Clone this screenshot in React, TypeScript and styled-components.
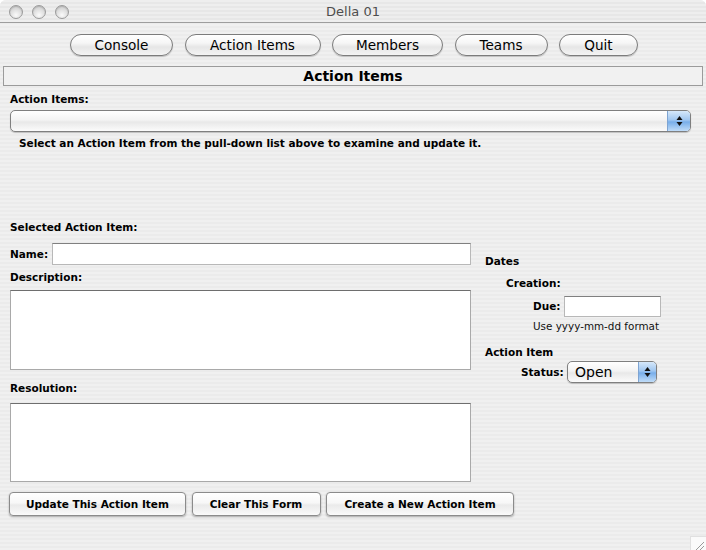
import React from "react";
import styled, { createGlobalStyle } from "styled-components";

const Global = createGlobalStyle`
  html, body { margin: 0; padding: 0; background: #ffffff; }
  body { font-family: "DejaVu Sans", "Liberation Sans", sans-serif; }
  * { box-sizing: border-box; }
`;

const Window = styled.div`
  position: relative;
  width: 706px;
  height: 550px;
  display: flex;
  flex-direction: column;
  border-radius: 6px 6px 0 0;
  overflow: hidden;
  background: repeating-linear-gradient(
    to bottom,
    #f0f0f0 0px,
    #f0f0f0 2px,
    #ebebeb 2px,
    #ebebeb 4px
  );
`;

const TitleBar = styled.div`
  height: 23px;
  flex: none;
  display: grid;
  grid-template-columns: 1fr auto 1fr;
  align-items: center;
  border-bottom: 1px solid #9d9d9d;
  background: repeating-linear-gradient(
    to bottom,
    #eeeeee 0px,
    #eeeeee 2px,
    #e7e7e7 2px,
    #e7e7e7 4px
  );
`;

const Lights = styled.div`
  display: flex;
  gap: 9px;
  padding-left: 9px;
  padding-top: 2px;
`;

const Light = styled.span`
  width: 14px;
  height: 14px;
  border-radius: 50%;
  border: 1px solid #9a9a9a;
  background: radial-gradient(circle at 50% 75%, #fafafa 0%, #dcdcdc 55%, #c4c4c4 100%);
  box-shadow: inset 0 1px 1px rgba(0, 0, 0, 0.15);
`;

const Title = styled.div`
  font-size: 13px;
  color: #4e4e4e;
  padding-top: 1px;
`;

const Toolbar = styled.div`
  display: flex;
  justify-content: center;
  gap: 11.5px;
  padding-top: 11px;
  padding-left: 2px;
`;

const PillButton = styled.button<{ $w: number }>`
  width: ${(p) => p.$w}px;
  height: 22px;
  padding: 0;
  border: 1px solid #7c7c7c;
  border-radius: 11px;
  font-family: "DejaVu Sans", sans-serif;
  font-size: 13.6px;
  color: #000;
  background: linear-gradient(
    to bottom,
    #ffffff 0%,
    #f6f6f6 40%,
    #e6e6e6 60%,
    #f4f4f4 100%
  );
  box-shadow: 0 1px 1px rgba(0, 0, 0, 0.2);
  line-height: 20px;
`;

const Header = styled.div`
  margin: 10px 3px 0;
  height: 20px;
  border: 1px solid #9b9b9b;
  background: #f1f1f1;
  text-align: center;
  font-weight: bold;
  font-size: 14px;
  line-height: 18px;
  color: #000;
`;

const Content = styled.div`
  display: flex;
  flex-direction: column;
  padding: 0 10px;
`;

const Label = styled.div<{ $indent?: number; $mt?: number }>`
  font-size: 10.5px;
  font-weight: bold;
  line-height: 13px;
  color: #000;
  padding-left: ${(p) => p.$indent ?? 0}px;
  margin-top: ${(p) => p.$mt ?? 0}px;
  white-space: nowrap;
`;

const Note = styled.div<{ $indent?: number; $mt?: number }>`
  font-size: 10.4px;
  line-height: 13px;
  color: #111;
  padding-left: ${(p) => p.$indent ?? 0}px;
  margin-top: ${(p) => p.$mt ?? 0}px;
  white-space: nowrap;
`;

const PopUp = styled.div<{ $w?: number }>`
  display: flex;
  height: 22px;
  width: ${(p) => (p.$w ? `${p.$w}px` : "auto")};
  border: 1px solid #7f7f7f;
  border-radius: 5px;
  overflow: hidden;
  background: linear-gradient(to bottom, #ffffff 0%, #f3f3f3 45%, #e8e8e8 55%, #fbfbfb 100%);
  box-shadow: 0 1px 1px rgba(0, 0, 0, 0.2);
`;

const MainPopUp = styled(PopUp)`
  margin-top: 4px;
  margin-right: 5px;
`;

const PopValue = styled.div`
  flex: 1;
  font-size: 14px;
  line-height: 20px;
  padding-left: 7px;
  color: #000;
`;

const PopArrow = styled.div<{ $w: number }>`
  width: ${(p) => p.$w}px;
  flex: none;
  display: flex;
  align-items: center;
  justify-content: center;
  border-left: 1px solid #7ea4d2;
  background: linear-gradient(to bottom, #d6e8fa 0%, #9fc6f0 45%, #78aeea 55%, #c0dcf8 100%);
`;

const FormGrid = styled.div`
  display: grid;
  grid-template-columns: 461px 1fr;
  column-gap: 14px;
  margin-top: 71px;
`;

const Column = styled.div<{ $pt?: number }>`
  display: flex;
  flex-direction: column;
  padding-top: ${(p) => p.$pt ?? 0}px;
`;

const FieldRow = styled.div<{ $indent?: number; $mt?: number }>`
  display: flex;
  align-items: center;
  padding-left: ${(p) => p.$indent ?? 0}px;
  margin-top: ${(p) => p.$mt ?? 0}px;
`;

const RowLabel = styled(Label)<{ $w: number }>`
  width: ${(p) => p.$w}px;
  flex: none;
`;

const TextField = styled.input<{ $w?: number; $h: number }>`
  height: ${(p) => p.$h}px;
  width: ${(p) => (p.$w ? `${p.$w}px` : "auto")};
  flex: ${(p) => (p.$w ? "none" : "1")};
  min-width: 0;
  border: 1px solid #b8b8b8;
  border-top-color: #808080;
  background: #fff;
  padding: 0 3px;
  font-family: "DejaVu Sans", sans-serif;
  font-size: 11px;
  outline: none;
`;

const TextArea = styled.textarea<{ $h: number; $mt: number }>`
  height: ${(p) => p.$h}px;
  margin-top: ${(p) => p.$mt}px;
  width: 100%;
  resize: none;
  border: 1px solid #a9a9a9;
  border-top-color: #6e6e6e;
  background: #fff;
  font-family: "DejaVu Sans", sans-serif;
  font-size: 11px;
  outline: none;
  display: block;
`;

const ButtonRow = styled.div`
  display: flex;
  gap: 5.5px;
  margin-top: 10px;
  margin-left: -1px;
`;

const PushButton = styled.button<{ $w: number }>`
  width: ${(p) => p.$w}px;
  height: 24px;
  padding: 0;
  border: 1px solid #8b8b8b;
  border-radius: 4px;
  font-family: "DejaVu Sans", sans-serif;
  font-weight: bold;
  font-size: 10.5px;
  color: #000;
  background: linear-gradient(to bottom, #ffffff 0%, #f7f7f7 45%, #eaeaea 55%, #fafafa 100%);
  box-shadow: 0 1px 2px rgba(0, 0, 0, 0.3);
`;

const Grip = styled.div`
  position: absolute;
  right: 0;
  bottom: 0;
  width: 16px;
  height: 14px;
  background: #fafafa;
  border-top: 1px solid #e0e0e0;
  border-left: 1px solid #e0e0e0;
`;

const Arrows = () => (
  <svg width="7" height="12" viewBox="0 0 7 12">
    <path d="M3.5 1 L6.5 5 L0.5 5 Z" fill="#111" />
    <path d="M3.5 11 L6.5 7 L0.5 7 Z" fill="#111" />
  </svg>
);

export default function App() {
  return (
    <>
      <Global />
      <Window>
        <TitleBar>
          <Lights>
            <Light />
            <Light />
            <Light />
          </Lights>
          <Title>Della 01</Title>
          <div />
        </TitleBar>
        <Toolbar>
          <PillButton $w={103}>Console</PillButton>
          <PillButton $w={136}>Action Items</PillButton>
          <PillButton $w={111}>Members</PillButton>
          <PillButton $w={93}>Teams</PillButton>
          <PillButton $w={79}>Quit</PillButton>
        </Toolbar>
        <Header>Action Items</Header>
        <Content>
          <Label $mt={7}>Action Items:</Label>
          <MainPopUp>
            <PopValue />
            <PopArrow $w={23}>
              <Arrows />
            </PopArrow>
          </MainPopUp>
          <Label $indent={9} $mt={5}>
            Select an Action Item from the pull-down list above to examine and update it.
          </Label>
          <FormGrid>
            <Column>
              <Label>Selected Action Item:</Label>
              <FieldRow $mt={9}>
                <RowLabel $w={42}>Name:</RowLabel>
                <TextField $h={22} />
              </FieldRow>
              <Label $mt={6}>Description:</Label>
              <TextArea $h={80} $mt={6} />
              <Label $mt={12}>Resolution:</Label>
              <TextArea $h={79} $mt={8} />
            </Column>
            <Column $pt={34}>
              <Label>Dates</Label>
              <Label $indent={21} $mt={9}>Creation:</Label>
              <FieldRow $indent={48} $mt={6}>
                <RowLabel $w={31}>Due:</RowLabel>
                <TextField $h={21} $w={97} />
              </FieldRow>
              <Note $indent={48} $mt={3}>Use yyyy-mm-dd format</Note>
              <Label $mt={13}>Action Item</Label>
              <FieldRow $indent={36} $mt={2}>
                <RowLabel $w={46}>Status:</RowLabel>
                <PopUp $w={90}>
                  <PopValue>Open</PopValue>
                  <PopArrow $w={18}>
                    <Arrows />
                  </PopArrow>
                </PopUp>
              </FieldRow>
            </Column>
          </FormGrid>
          <ButtonRow>
            <PushButton $w={177}>Update This Action Item</PushButton>
            <PushButton $w={129}>Clear This Form</PushButton>
            <PushButton $w={188}>Create a New Action Item</PushButton>
          </ButtonRow>
        </Content>
        <Grip>
          <svg width="15" height="13" viewBox="0 0 15 13">
            <path d="M13 3 L4 12 M13 7 L8 12" stroke="#9a9a9a" strokeWidth="1" />
          </svg>
        </Grip>
      </Window>
    </>
  );
}
